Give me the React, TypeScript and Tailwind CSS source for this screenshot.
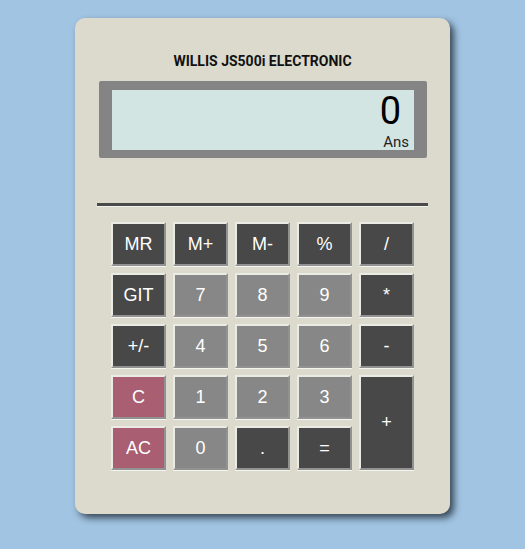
import React from "react";

type Key = { label: string; tone: "dark" | "gray" | "pink"; tall?: boolean };

const keys: Key[] = [
  { label: "MR", tone: "dark" },
  { label: "M+", tone: "dark" },
  { label: "M-", tone: "dark" },
  { label: "%", tone: "dark" },
  { label: "/", tone: "dark" },
  { label: "GIT", tone: "dark" },
  { label: "7", tone: "gray" },
  { label: "8", tone: "gray" },
  { label: "9", tone: "gray" },
  { label: "*", tone: "dark" },
  { label: "+/-", tone: "dark" },
  { label: "4", tone: "gray" },
  { label: "5", tone: "gray" },
  { label: "6", tone: "gray" },
  { label: "-", tone: "dark" },
  { label: "C", tone: "pink" },
  { label: "1", tone: "gray" },
  { label: "2", tone: "gray" },
  { label: "3", tone: "gray" },
  { label: "+", tone: "dark", tall: true },
  { label: "AC", tone: "pink" },
  { label: "0", tone: "gray" },
  { label: ".", tone: "dark" },
  { label: "=", tone: "dark" },
];

const toneClass = {
  dark: "bg-[#484848]",
  gray: "bg-[#878787]",
  pink: "bg-[#a95e72]",
};

function CalcKey({ k }: { k: Key }) {
  return (
    <button
      className={`${toneClass[k.tone]} ${
        k.tall ? "row-span-2" : ""
      } flex items-center justify-center border-2 border-t-[#ebebe6] border-l-[#ebebe6] border-r-[#929292] border-b-[#929292] font-['Liberation_Sans',Arial,sans-serif] text-[18px] text-white shadow-[0_1px_0_#f4f4f0]`}
    >
      {k.label}
    </button>
  );
}

export default function App() {
  return (
    <div className="min-h-[549px] w-full bg-[#a1c4e2] pt-[18px]">
      <div className="mx-auto h-[496px] w-[375px] rounded-[10px] bg-[#dbdacd] pt-[35px] shadow-[4px_4px_7px_rgba(20,30,40,0.75)]">
        <h1 className="text-center font-['Roboto',sans-serif] text-[14px] font-bold leading-[16px] text-[#111]">
          WILLIS JS500i ELECTRONIC
        </h1>

        <div className="ml-[24px] mr-[23px] mt-[12px] rounded-[2px] bg-[#848484] px-[13px] pb-[8px] pt-[9px]">
          <div className="flex h-[60px] flex-col items-end bg-[#d3e5e2] font-['Roboto',sans-serif] text-black">
            <span className="mr-[13px] mt-[2px] text-[38px] font-normal leading-none">0</span>
            <span className="mr-[5px] mt-[5px] text-[15px] leading-none text-[#222]">Ans</span>
          </div>
        </div>

        <div className="mx-[22px] mt-[45px] border-b border-t-[3px] border-b-[#f2f2ee] border-t-[#4a4a4a]" />

        <div className="ml-[36px] mt-[15px] grid grid-cols-[repeat(5,55px)] grid-rows-[repeat(5,44px)] gap-[7px]">
          {keys.map((k) => (
            <CalcKey key={k.label} k={k} />
          ))}
        </div>
      </div>
    </div>
  );
}
